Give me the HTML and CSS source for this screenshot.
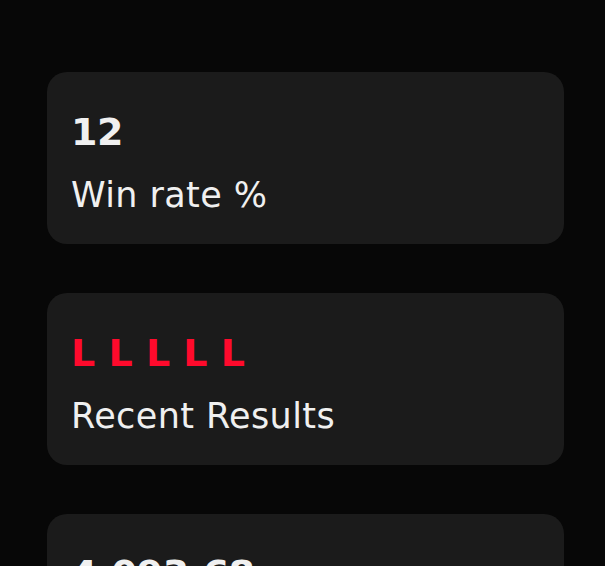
FILE: index.html
```html
<!DOCTYPE html>
<html lang="en">
<head>
  <meta charset="UTF-8" />
  <meta name="viewport" content="width=device-width, initial-scale=1.0" />
  <title>Player Stats</title>
  <link rel="stylesheet" href="styles.css">
</head>
<body>

<div class="stats">
  <div class="card">
    <div class="value">12</div>
    <div class="label">Win rate %</div>
  </div>

  <div class="card">
    <div class="value loss">L L L L L</div>
    <div class="label">Recent Results</div>
  </div>

  <div class="card">
    <div class="value">4,093.68</div>
    <div class="label">Total earnings</div>
  </div>
</div>

</body>
</html>
```

FILE: styles.css
```css
html, body { margin: 0; padding: 0; background: #070707; }
body { font-family: "DejaVu Sans", sans-serif; color: #f0f0f0; }
.stats { display: flex; flex-direction: column; gap: 49px; padding: 72px 41px 40px 47px; }
.card { background: #1b1b1b; border-radius: 20px; padding: 36px 24px 28px; display: flex; flex-direction: column; gap: 18px; }
.value { font-size: 38px; font-weight: bold; height: 48px; line-height: 48px; letter-spacing: -0.5px; }
.value.loss { color: #ff0a2c; letter-spacing: 0; }
.label { font-size: 35px; line-height: 42px; letter-spacing: 0.4px; }
```
